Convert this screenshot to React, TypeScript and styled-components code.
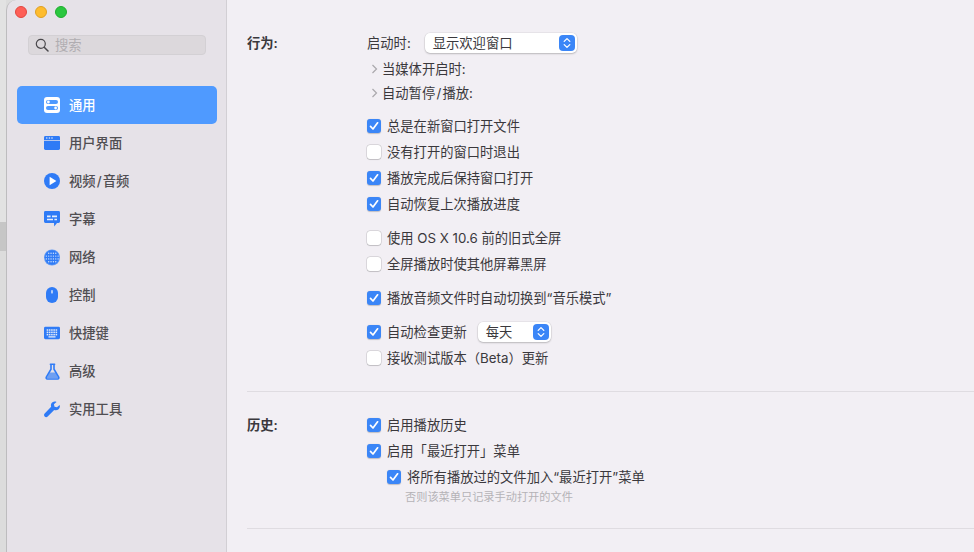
import { createGlobalStyle, styled } from "styled-components";
import { ReactNode } from "react";

const GlobalStyle = createGlobalStyle`
  html, body {
    margin: 0;
    padding: 0;
    width: 974px;
    height: 552px;
    overflow: hidden;
    background: #dcdcdc;
    font-family: "Inter", "Noto Sans CJK SC", sans-serif;
    font-size: 13.3px;
    color: #3a383c;
  }
  * { box-sizing: border-box; }
`;

const Blue = "#2f7bf6";

const navItems: { label: string; icon: ReactNode }[] = [
  {
    label: "通用",
    icon: (
      <svg width="16" height="16" viewBox="0 0 16 16">
        <rect width="16" height="16" rx="3" fill="#fff" />
        <rect x="2" y="3" width="12" height="4" rx="2" fill="#4f9aff" />
        <rect x="2" y="9" width="12" height="4" rx="2" fill="#4f9aff" />
        <circle cx="4.4" cy="5" r="1.4" fill="#fff" />
        <circle cx="11.6" cy="11" r="1.4" fill="#fff" />
      </svg>
    ),
  },
  {
    label: "用户界面",
    icon: (
      <svg width="16" height="14" viewBox="0 0 16 14">
        <path d="M0 5h16v7.6a1.400 1.400 0 0 1-1.400 1.400H1.400A1.400 1.400 0 0 1 0 12.600z" fill={Blue} />
        <path d="M1.400 0h13.200A1.400 1.400 0 0 1 16 1.400V4.300H0V1.400A1.400 1.400 0 0 1 1.400 0z" fill={Blue} />
        <circle cx="2.800" cy="2" r=".8" fill="#dfe8f8" />
        <circle cx="5.400" cy="2" r=".8" fill="#dfe8f8" />
        <circle cx="8" cy="2" r=".8" fill="#dfe8f8" />
      </svg>
    ),
  },
  {
    label: "视频\u200A/\u200A音频",
    icon: (
      <svg width="16" height="16" viewBox="0 0 16 16">
        <circle cx="8" cy="8" r="8" fill={Blue} />
        <path d="M5.600 3.800 12.400 8l-6.800 4.200z" fill="#fff" />
      </svg>
    ),
  },
  {
    label: "字幕",
    icon: (
      <svg width="16" height="16" viewBox="0 0 16 16">
        <path d="M1.400 0h13.200A1.400 1.400 0 0 1 16 1.400v9.200a1.400 1.400 0 0 1-1.400 1.400H13l-2.800 3.600L10 12H1.400A1.400 1.400 0 0 1 0 10.600V1.400A1.400 1.400 0 0 1 1.400 0z" fill={Blue} />
        <path d="M3 4.600h3.600v1.600H3zM8 4.600h5v1.600H8zM3 7.800h6v1.500H3zM10.400 7.800H13v1.500h-2.600z" fill="#e6eefb" />
      </svg>
    ),
  },
  {
    label: "网络",
    icon: (
      <svg width="17" height="17" viewBox="0 0 17 17">
        <circle cx="8.500" cy="8.500" r="8.500" fill="#5c97f4" />
        <circle cx="8.500" cy="8.500" r="7.600" fill={Blue} />
        {[4, 7, 10, 13].flatMap((y) =>
          [2.500, 5, 7.500, 10, 12.500, 15].map((x) =>
            (y === 4 || y === 13) && (x < 4 || x > 14) ? null : (
              <circle key={`${x}-${y}`} cx={x} cy={y} r=".75" fill="#d5e4fb" />
            )
          )
        )}
      </svg>
    ),
  },
  {
    label: "控制",
    icon: (
      <svg width="12" height="16" viewBox="0 0 12 16">
        <rect width="12" height="16" rx="6" fill={Blue} />
        <rect x="5.300" y="3" width="1.400" height="3.600" rx=".7" fill="#e6eefb" />
      </svg>
    ),
  },
  {
    label: "快捷键",
    icon: (
      <svg width="18" height="14" viewBox="0 0 18 14">
        <rect width="18" height="14" rx="1.600" fill={Blue} />
        {[2.800, 5.400, 8].flatMap((y) =>
          [3, 5.500, 8, 10.500, 13].map((x) => (
            <rect key={`${x}-${y}`} x={x} y={y} width="1.800" height="1.700" fill="#dfe8f8" />
          ))
        )}
        <rect x="5" y="10.600" width="8" height="1.500" fill="#dfe8f8" />
      </svg>
    ),
  },
  {
    label: "高级",
    icon: (
      <svg width="15" height="17" viewBox="0 0 15 17">
        <path d="M5.400 1.200h4.200M6 1.200v5L1.300 14.200a1.200 1.200 0 0 0 1 1.800h10.400a1.200 1.200 0 0 0 1-1.800L9 6.200v-5" fill="none" stroke={Blue} strokeWidth="1.600" strokeLinecap="round" />
        <path d="M4.600 9.400h5.800l3 5.600H1.600z" fill={Blue} opacity=".65" />
      </svg>
    ),
  },
  {
    label: "实用工具",
    icon: (
      <svg width="17" height="17" viewBox="0 0 17 17">
        <path d="M16.600 3.600 13.800 6.200l-2.600-.7-.7-2.500L13.300.4C11-.6 8.200.5 7.500 2.800c-.3 1-.2 2 .1 2.900L.7 12.700c-.9.900-.9 2.400 0 3.300s2.300.9 3.200 0l6.900-7c2.800 1.200 6-.8 6.100-3.800 0-.6-.1-1.100-.3-1.600z" fill={Blue} />
      </svg>
    ),
  },
];

const Page = styled.div`
  width: 974px;
  height: 552px;
  display: flex;
  overflow: hidden;
`;

const DesktopEdge = styled.div`
  width: 6px;
  height: 552px;
  flex-shrink: 0;
  display: flex;
  flex-direction: column;
`;

const EdgePiece = styled.div<{ $h: number; $c: string }>`
  height: ${(p) => p.$h}px;
  background: ${(p) => p.$c};
`;

const Sidebar = styled.aside`
  width: 221px;
  height: 552px;
  flex-shrink: 0;
  background: #e6e2e8;
  border-right: 1px solid #d2cfd4;
  border-left: 1px solid #bdbcbe;
  border-top-left-radius: 10px;
  padding: 6px 9px 0 10px;
`;

const Lights = styled.div`
  display: flex;
  gap: 8px;
  margin-left: -2px;
`;

const Light = styled.span<{ $fill: string; $edge: string }>`
  width: 12px;
  height: 12px;
  border-radius: 50%;
  background: ${(p) => p.$fill};
  border: 0.5px solid ${(p) => p.$edge};
`;

const SearchBox = styled.div`
  margin: 17px 11px 0 11px;
  width: 178px;
  height: 20px;
  border-radius: 4px;
  background: #dcd8dc;
  border: 1px solid #d3d0d4;
  display: flex;
  align-items: center;
  gap: 6px;
  padding-left: 6px;
  color: #b0adb1;
`;

const Nav = styled.nav`
  margin-top: 31px;
  display: flex;
  flex-direction: column;
`;

const NavItem = styled.div<{ $active?: boolean }>`
  width: 200px;
  height: 38px;
  border-radius: 5px;
  background: ${(p) => (p.$active ? "#4f9aff" : "transparent")};
  color: ${(p) => (p.$active ? "#fff" : "#504e52")};
  font-weight: 500;
  display: flex;
  align-items: center;
  padding-left: 27px;
`;

const NavIcon = styled.span`
  width: 16px;
  margin-right: 9px;
  display: flex;
  align-items: center;
  justify-content: center;
  flex-shrink: 0;
`;

const Content = styled.main`
  flex: 1;
  height: 552px;
  background: #f2eff4;
  padding: 30px 0 0 20px;
`;

const Section = styled.section<{ $pad: number }>`
  display: grid;
  grid-template-columns: 120px 1fr;
  padding-bottom: ${(p) => p.$pad}px;
  margin-bottom: 20px;
  border-bottom: 1px solid #dfdce1;
`;

const SectionLabel = styled.div`
  font-weight: 600;
  line-height: 26px;
  color: #3a383c;
`;

const Options = styled.div`
  display: flex;
  flex-direction: column;
`;

const Row = styled.div<{ $gap?: number; $indent?: number }>`
  height: 26px;
  display: flex;
  align-items: center;
  margin-top: ${(p) => p.$gap ?? 0}px;
  margin-left: ${(p) => p.$indent ?? 0}px;
  white-space: pre;
`;

const Text = styled.span`
  margin-top: -2px;
`;

const Disclosure = styled.div<{ $gap?: number }>`
  height: 24px;
  display: flex;
  align-items: center;
  gap: 4px;
  padding-left: 4px;
  margin-top: ${(p) => p.$gap ?? 0}px;
`;

const Box = styled.span<{ $on?: boolean }>`
  width: 14px;
  height: 14px;
  border-radius: 3px;
  margin-right: 6px;
  flex-shrink: 0;
  display: flex;
  align-items: center;
  justify-content: center;
  background: ${(p) => (p.$on ? "#3b86f7" : "#fff")};
  box-shadow: ${(p) =>
    p.$on
      ? "0 0.5px 1px rgba(0,0,0,.2)"
      : "0 0 0 0.5px rgba(0,0,0,.18), 0 0.5px 1px rgba(0,0,0,.12)"};
`;

const Select = styled.div<{ $w: number; $left: number }>`
  width: ${(p) => p.$w}px;
  margin-left: ${(p) => p.$left}px;
  height: 20px;
  background: #fff;
  border-radius: 5px;
  box-shadow: 0 0 0 0.5px rgba(0,0,0,.08), 0 1px 2px rgba(0,0,0,.2);
  display: flex;
  align-items: center;
  justify-content: space-between;
  padding: 0 2px 0 8px;
`;

const Stepper = styled.span`
  width: 16px;
  height: 16px;
  border-radius: 4px;
  background: #3b86f7;
  display: flex;
  align-items: center;
  justify-content: center;
`;

const Hint = styled.div`
  font-size: 11.2px;
  line-height: 14px;
  color: #b5b3b7;
  margin: 0 0 0 38px;
`;

const Check = ({ on, children, gap, indent, extra }: { on?: boolean; children: ReactNode; gap?: number; indent?: number; extra?: ReactNode }) => (
  <Row $gap={gap} $indent={indent}>
    <Box $on={on}>
      {on && (
        <svg width="10" height="10" viewBox="0 0 10 10">
          <path d="M1.500 5.400 4 8 8.600 1.800" fill="none" stroke="#fff" strokeWidth="1.700" strokeLinecap="round" strokeLinejoin="round" />
        </svg>
      )}
    </Box>
    <Text>{children}</Text>
    {extra}
  </Row>
);

const Popup = ({ w, left, children }: { w: number; left: number; children: ReactNode }) => (
  <Select $w={w} $left={left}>
    <Text>{children}</Text>
    <Stepper>
      <svg width="8" height="12" viewBox="0 0 8 12">
        <path d="M1.200 4.400 4 1.600l2.800 2.800M1.200 7.600 4 10.400l2.800-2.800" fill="none" stroke="#fff" strokeWidth="1.300" strokeLinecap="round" strokeLinejoin="round" />
      </svg>
    </Stepper>
  </Select>
);

const Chevron = () => (
  <svg width="7" height="10" viewBox="0 0 7 10">
    <path d="M1.500 1 5.500 5l-4 4" fill="none" stroke="#aaa8ac" strokeWidth="1.200" />
  </svg>
);

const App = () => {
  return (
    <Page>
      <GlobalStyle />
      <DesktopEdge>
        <EdgePiece $h={222} $c="#e2e2e2" />
        <EdgePiece $h={29} $c="#c6c6c6" />
        <EdgePiece $h={301} $c="#dcdcdc" />
      </DesktopEdge>
      <Sidebar>
        <Lights>
          <Light $fill="#fe5f57" $edge="#e2463f" />
          <Light $fill="#febc2e" $edge="#dfa023" />
          <Light $fill="#2ac73f" $edge="#1fad2d" />
        </Lights>
        <SearchBox>
          <svg width="14" height="14" viewBox="0 0 14 14">
            <circle cx="5.800" cy="5.800" r="4.500" fill="none" stroke="#4a484c" strokeWidth="1.200" />
            <path d="m9.200 9.200 3.800 3.800" stroke="#4a484c" strokeWidth="1.500" strokeLinecap="round" />
          </svg>
          <Text>搜索</Text>
        </SearchBox>
        <Nav>
          {navItems.map((item, i) => (
            <NavItem key={item.label} $active={i === 0}>
              <NavIcon>{item.icon}</NavIcon>
              <Text>{item.label}</Text>
            </NavItem>
          ))}
        </Nav>
      </Sidebar>
      <Content>
        <Section $pad={20}>
          <SectionLabel>行为:</SectionLabel>
          <Options>
            <Row>
              <Text>启动时:</Text>
              <Popup w={152} left={14}>显示欢迎窗口</Popup>
            </Row>
            <Disclosure $gap={1}><Chevron /><Text>当媒体开启时:</Text></Disclosure>
            <Disclosure><Chevron /><Text>自动暂停{"\u200A/\u200A"}播放:</Text></Disclosure>
            <Check on gap={8}>总是在新窗口打开文件</Check>
            <Check>没有打开的窗口时退出</Check>
            <Check on>播放完成后保持窗口打开</Check>
            <Check on>自动恢复上次播放进度</Check>
            <Check gap={8}>使用 OS X 10.6 前的旧式全屏</Check>
            <Check>全屏播放时使其他屏幕黑屏</Check>
            <Check on gap={8}>播放音频文件时自动切换到“音乐模式”</Check>
            <Check on gap={8} extra={<Popup w={73} left={11}>每天</Popup>}>自动检查更新</Check>
            <Check>接收测试版本（Beta）更新</Check>
          </Options>
        </Section>
        <Section $pad={24}>
          <SectionLabel>历史:</SectionLabel>
          <Options>
            <Check on>启用播放历史</Check>
            <Check on>启用「最近打开」菜单</Check>
            <Check on indent={20}>将所有播放过的文件加入“最近打开”菜单</Check>
            <Hint>否则该菜单只记录手动打开的文件</Hint>
          </Options>
        </Section>
      </Content>
    </Page>
  );
};

export default App;
